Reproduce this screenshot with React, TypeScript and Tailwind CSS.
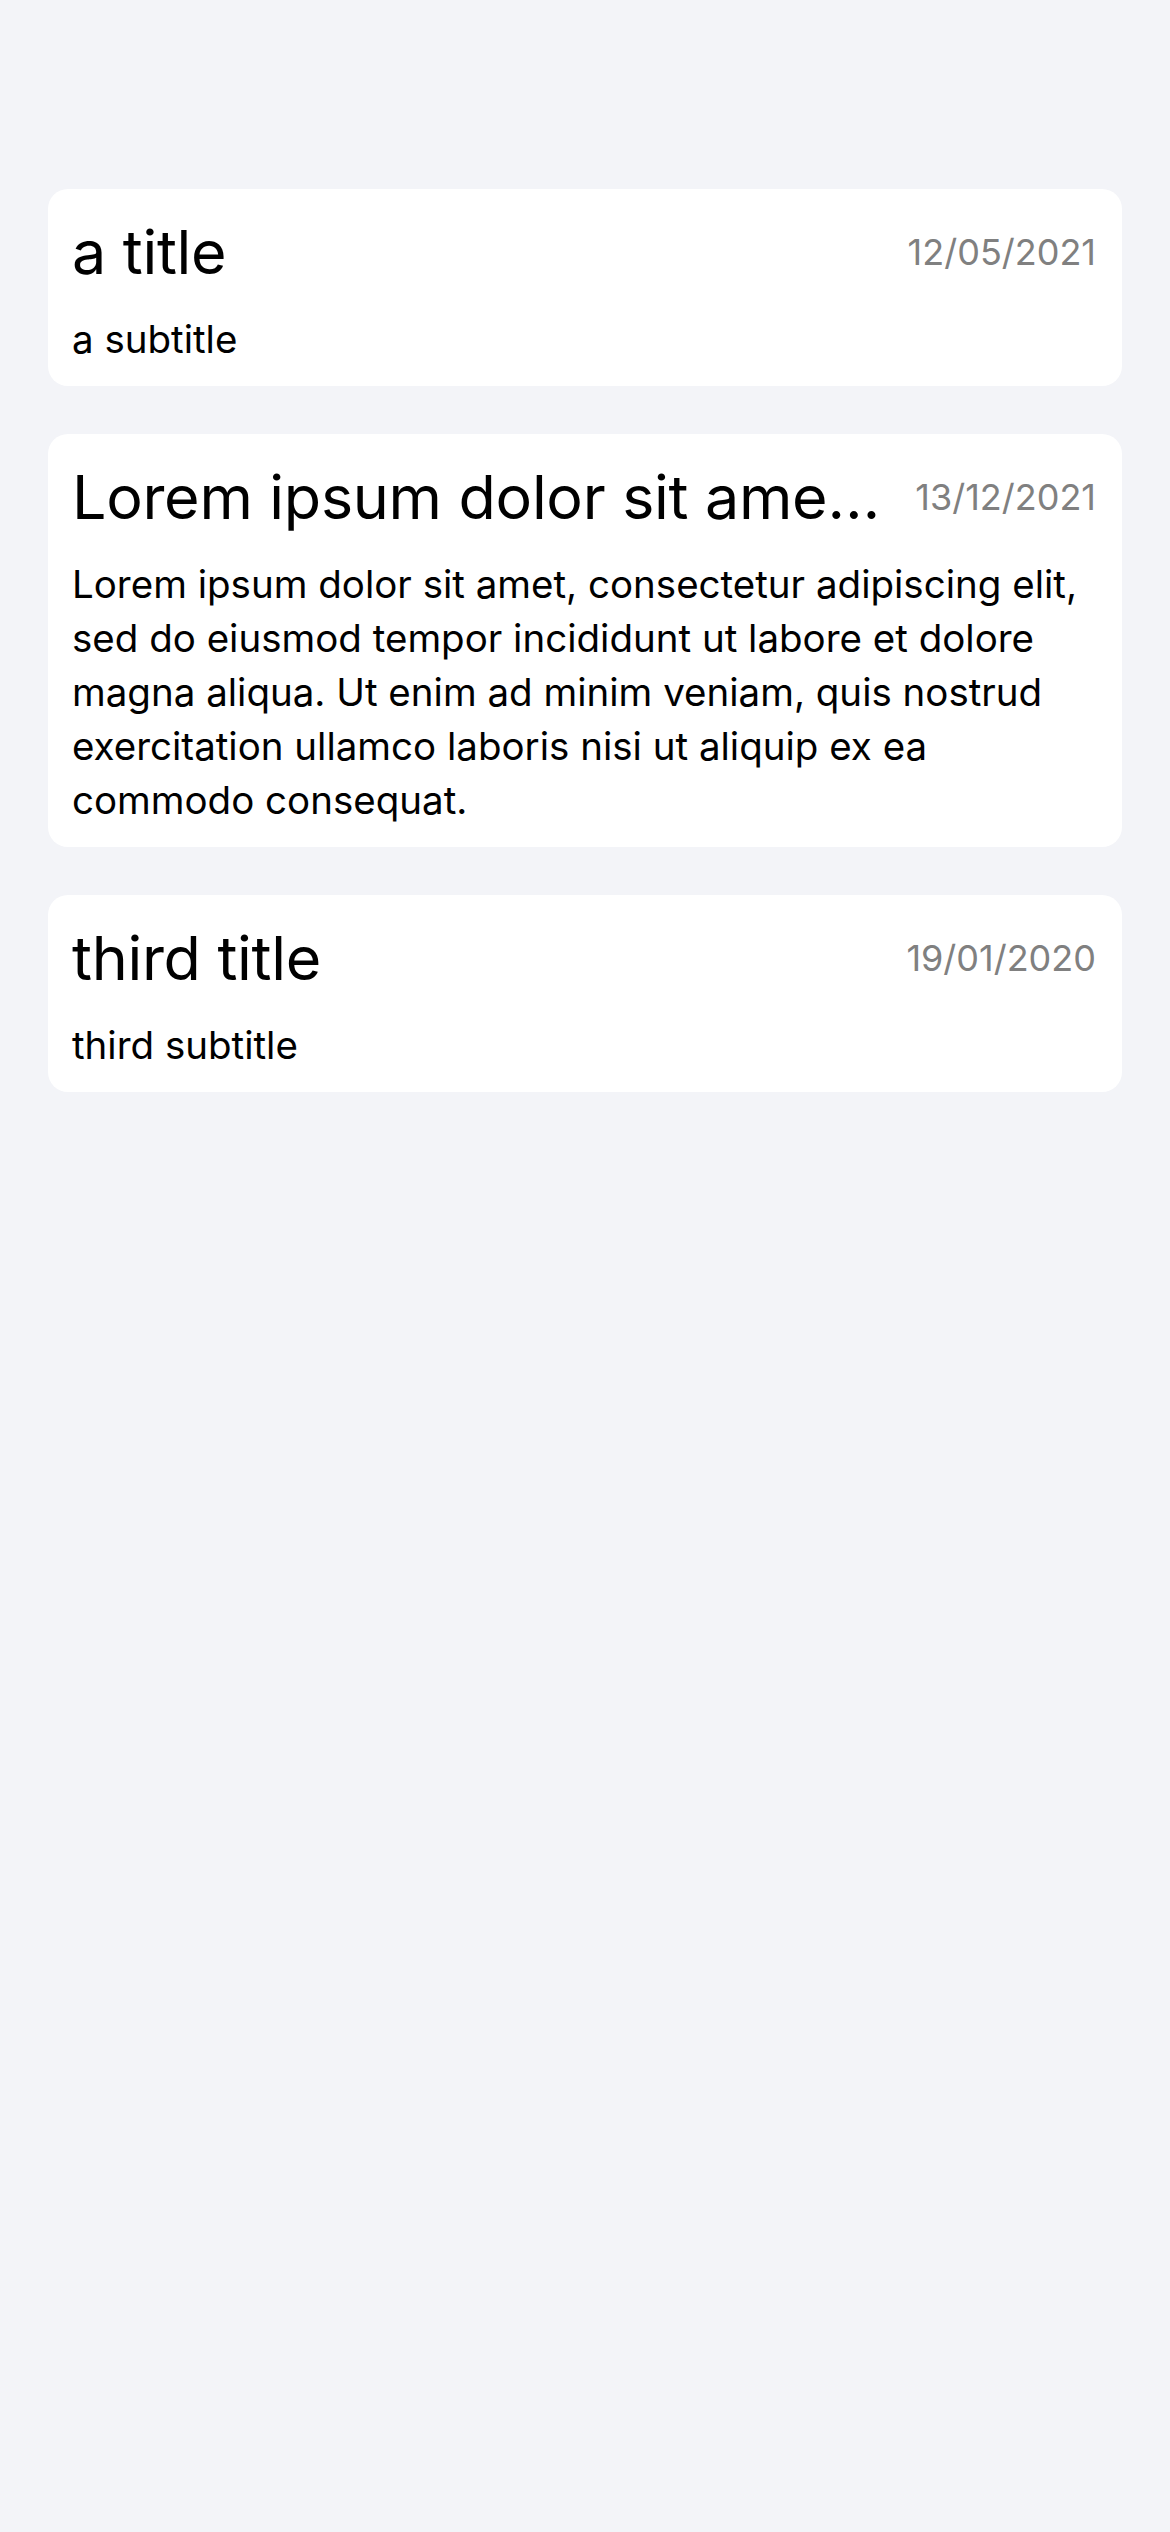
const notes = [
  { title: 'a title', subtitle: 'a subtitle', date: '12/05/2021' },
  {
    title: 'Lorem ipsum dolor sit amet, consectetur adipiscing elit',
    subtitle:
      'Lorem ipsum dolor sit amet, consectetur adipiscing elit, sed do eiusmod tempor incididunt ut labore et dolore magna aliqua. Ut enim ad minim veniam, quis nostrud exercitation ullamco laboris nisi ut aliquip ex ea commodo consequat.',
    date: '13/12/2021',
  },
  { title: 'third title', subtitle: 'third subtitle', date: '19/01/2020' },
];

type Note = (typeof notes)[number];

function NoteCard({ note }: { note: Note }) {
  return (
    <div className="rounded-[20px] bg-white pt-[24px] pr-[26px] pb-[20px] pl-[24px]">
      <div className="flex items-center gap-[24px]">
        <h2 className="min-w-0 flex-1 truncate text-[61px] leading-[78px] font-normal tracking-[-0.3px] text-black">
          {note.title}
        </h2>
        <span className="shrink-0 text-[36px] leading-[44px] text-[#808080]">{note.date}</span>
      </div>
      <p className="mt-[21px] text-[38.5px] leading-[54px] text-black">{note.subtitle}</p>
    </div>
  );
}

export default function App() {
  return (
    <div className="min-h-screen bg-[#f3f4f8] px-[48px] pt-[189px] font-['Inter','Roboto',sans-serif]">
      <div className="flex flex-col gap-[48px]">
        {notes.map((note) => (
          <NoteCard key={note.date} note={note} />
        ))}
      </div>
    </div>
  );
}
